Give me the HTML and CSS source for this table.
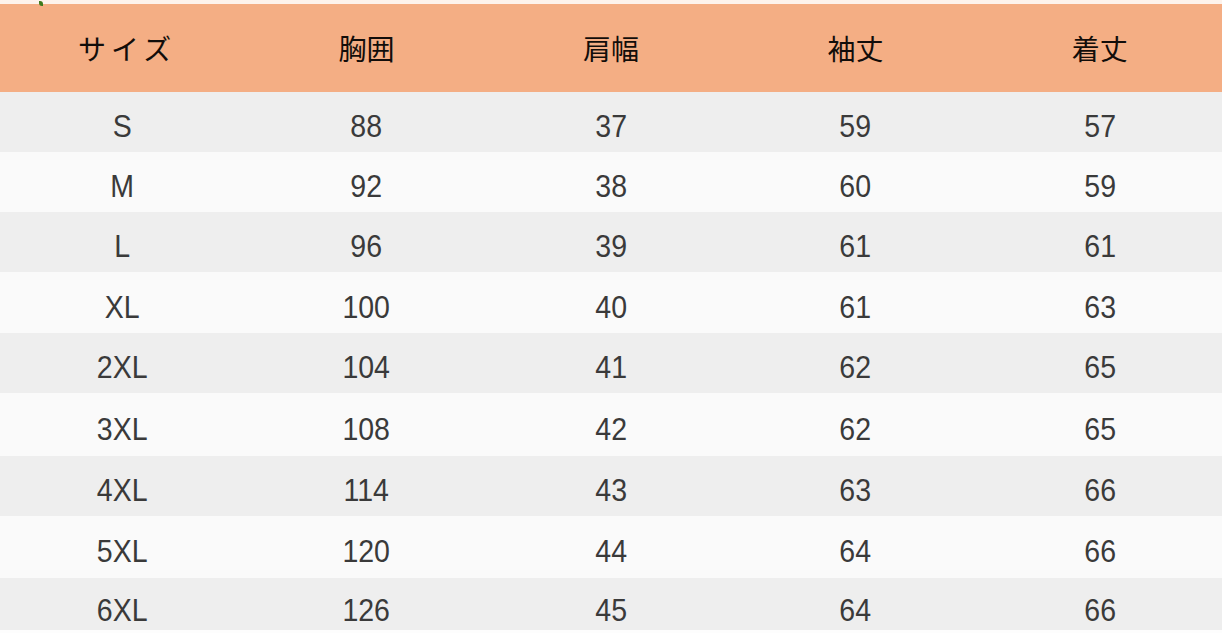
FILE: index.html
```html
<!DOCTYPE html>
<html lang="ja">
<head>
<meta charset="utf-8">
<title>サイズ表</title>
<link rel="stylesheet" href="styles.css">
</head>
<body>
<div class="sheet">
  <span class="leaf"></span>
  <div class="row head">
    <div class="cell kana">サイズ</div><div class="cell">胸囲</div><div class="cell">肩幅</div><div class="cell">袖丈</div><div class="cell">着丈</div>
  </div>
  <div class="row r1 gray"><div class="cell">S</div><div class="cell">88</div><div class="cell">37</div><div class="cell">59</div><div class="cell">57</div></div>
  <div class="row r2 white"><div class="cell">M</div><div class="cell">92</div><div class="cell">38</div><div class="cell">60</div><div class="cell">59</div></div>
  <div class="row r3 gray"><div class="cell">L</div><div class="cell">96</div><div class="cell">39</div><div class="cell">61</div><div class="cell">61</div></div>
  <div class="row r4 white"><div class="cell">XL</div><div class="cell">100</div><div class="cell">40</div><div class="cell">61</div><div class="cell">63</div></div>
  <div class="row r5 gray"><div class="cell">2XL</div><div class="cell">104</div><div class="cell">41</div><div class="cell">62</div><div class="cell">65</div></div>
  <div class="row r6 white"><div class="cell">3XL</div><div class="cell">108</div><div class="cell">42</div><div class="cell">62</div><div class="cell">65</div></div>
  <div class="row r7 gray"><div class="cell">4XL</div><div class="cell">114</div><div class="cell">43</div><div class="cell">63</div><div class="cell">66</div></div>
  <div class="row r8 white"><div class="cell">5XL</div><div class="cell">120</div><div class="cell">44</div><div class="cell">64</div><div class="cell">66</div></div>
  <div class="row r9 gray"><div class="cell">6XL</div><div class="cell">126</div><div class="cell">45</div><div class="cell">64</div><div class="cell">66</div></div>
</div>
</body>
</html>
```

FILE: styles.css
```css
html, body {
  margin: 0;
  padding: 0;
  background: #ffffff;
}
body {
  width: 1222px;
  height: 633px;
  overflow: hidden;
  font-family: "Liberation Sans", "Noto Sans CJK JP", sans-serif;
}
.sheet {
  position: relative;
  padding-top: 4px;
  background: #fdf3ec;
}
.leaf {
  position: absolute;
  left: 39px;
  top: 1px;
  width: 4px;
  height: 5px;
  background: #3d7a1c;
  border-radius: 0 3px 0 3px;
}
.row {
  display: grid;
  grid-template-columns: repeat(5, 1fr);
  align-items: center;
  color: #3a3a3a;
  font-size: 31px;
}
.cell {
  text-align: center;
  padding-top: 10px;
  transform: scaleX(0.92);
}
.head {
  height: 88px;
  background: #f4ae84;
  color: #120d0a;
  font-family: "Noto Sans CJK JP", sans-serif;
  font-size: 28px;
}
.head .cell {
  padding-top: 0;
  padding-bottom: 0;
  transform: none;
  font-weight: 400;
}
.head .kana {
  letter-spacing: 5px;
  padding-left: 10px;
}
.gray { background: #eeeeee; }
.white { background: #fafafa; }
.r1 { height: 60px; }
.r2 { height: 60px; }
.r3 { height: 60px; }
.r4 { height: 61px; }
.r5 { height: 60px; }
.r6 { height: 63px; }
.r7 { height: 60px; }
.r8 { height: 62px; }
.r9 { height: 52px; border-bottom: 3px solid #fdfdfd; }
.r9 .cell { padding-top: 14px; }
```
